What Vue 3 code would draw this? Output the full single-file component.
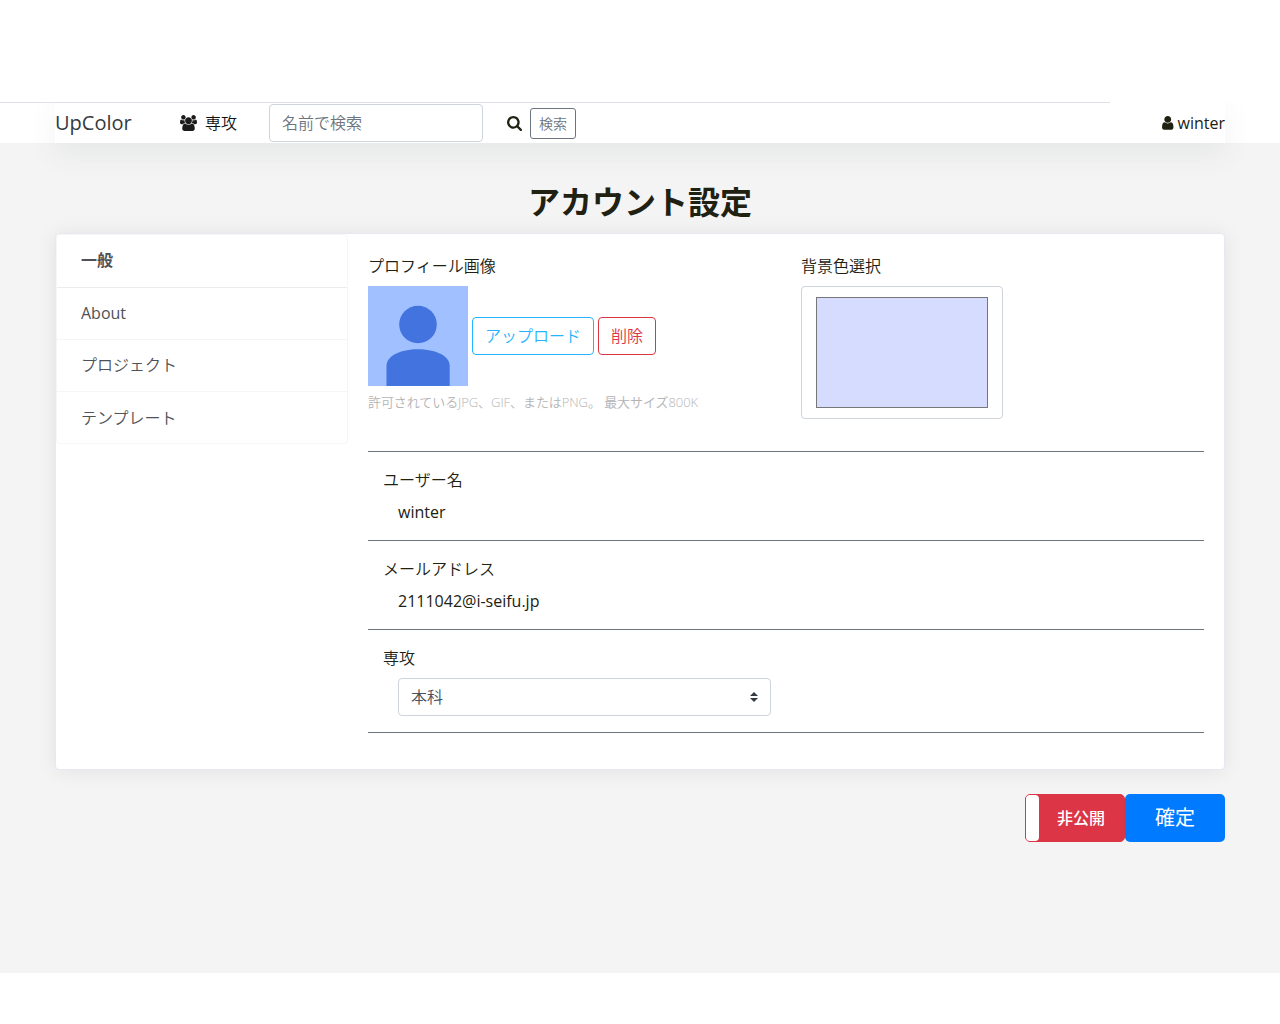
<script setup>
const tabs = ['一般', 'About', 'プロジェクト', 'テンプレート']
const account = { name: 'winter', mail: '2111042@i-seifu.jp' }
</script>

<template>
  <div class="page">
    <header class="topbar">
      <span class="topline"></span>
      <nav class="nav">
        <a class="brand">UpColor</a>
        <a class="major">
          <svg class="users" viewBox="0 0 1920 1792"><path d="M593 896q-162 5-265 128h-134q-82 0-138-40.5t-56-118.5q0-353 124-353 6 0 43.5 21t97.5 42.5 119 21.5q67 0 133-23-5 37-5 66 0 139 81 256zm1071 637q0 120-73 189.5t-194 69.5h-874q-121 0-194-69.5t-73-189.5q0-53 3.5-103.5t14-109 26.5-108.5 43-97.5 62-81 85.5-53.5 111.5-20q10 0 43 21.5t73 48 107 48 135 21.5 135-21.5 107-48 73-48 43-21.5q61 0 111.5 20t85.5 53.5 62 81 43 97.5 26.5 108.5 14 109 3.5 103.5zm-1024-1277q0 106-75 181t-181 75-181-75-75-181 75-181 181-75 181 75 75 181zm704 384q0 159-112.5 271.5t-271.5 112.5-271.5-112.5-112.5-271.5 112.5-271.5 271.5-112.5 271.5 112.5 112.5 271.5zm576 225q0 78-56 118.5t-138 40.5h-134q-103-123-265-128 81-117 81-256 0-29-5-66 66 23 133 23 59 0 119-21.5t97.5-42.5 43.5-21q124 0 124 353zm-128-609q0 106-75 181t-181 75-181-75-75-181 75-181 181-75 181 75 75 181z" /></svg>
          <span>専攻</span>
        </a>
        <div class="field search">名前で検索</div>
        <svg class="glass" viewBox="64 128 1664 1664"><path d="M1216 832q0-185-131.5-316.5t-316.5-131.5-316.5 131.5-131.5 316.5 131.5 316.5 316.5 131.5 316.5-131.5 131.5-316.5zm512 832q0 52-38 90t-90 38q-54 0-90-38l-343-342q-179 124-399 124-143 0-273.5-55.5t-225-150-150-225-55.5-273.5 55.5-273.5 150-225 225-150 273.5-55.5 273.5 55.5 225 150 150 225 55.5 273.5q0 220-124 399l343 343q37 37 37 90z" /></svg>
        <button class="find">検索</button>
        <a class="me">
          <svg class="user" viewBox="256 128 1280 1536"><path d="M1536 1399q0 109-62.5 187t-150.5 78h-854q-88 0-150.5-78t-62.5-187q0-85 8.5-160.5t31.5-152 58.5-131 94-89 134.5-34.5q131 128 313 128t313-128q76 0 134.5 34.5t94 89 58.5 131 31.5 152 8.5 160.5zm-256-887q0 159-112.5 271.5t-271.5 112.5-271.5-112.5-112.5-271.5 112.5-271.5 271.5-112.5 271.5 112.5 112.5 271.5z" /></svg>
          <span>winter</span>
        </a>
      </nav>
    </header>

    <main class="main">
      <h1>アカウント設定</h1>
      <section class="card">
        <ul class="tabs">
          <li v-for="(t, i) in tabs" :key="t" :class="{ active: i === 0, latin: t === 'About' }">{{ t }}</li>
        </ul>
        <div class="content">
          <div class="top">
            <div class="profile">
              <div class="label">プロフィール画像</div>
              <div class="picture">
                <svg class="avatar" viewBox="0 0 100 100">
                  <rect width="100" height="100" fill="#a0c0ff" />
                  <circle cx="50" cy="38.5" r="18.8" fill="#4273df" />
                  <path d="M18.5 100V80C18.5 69.500 33 63.300 50 63.300S81.700 69.500 81.700 80V100z" fill="#4273df" />
                </svg>
                <button class="btn upload">アップロード</button>
                <button class="btn remove">削除</button>
              </div>
              <div class="hint">許可されているJPG、GIF、またはPNG。 最大サイズ800K</div>
            </div>
            <div>
              <div class="label">背景色選択</div>
              <div class="picker"><div class="swatch"></div></div>
            </div>
          </div>
          <div class="row">
            <div class="label">ユーザー名</div>
            <div class="value">{{ account.name }}</div>
          </div>
          <div class="row">
            <div class="label">メールアドレス</div>
            <div class="value">{{ account.mail }}</div>
          </div>
          <div class="row last">
            <div class="label">専攻</div>
            <div class="field select">
              <span>本科</span>
              <svg viewBox="0 0 4 5"><path fill="#343a40" d="M2 0L0 2h4zm0 5L0 3h4z" /></svg>
            </div>
          </div>
        </div>
      </section>
      <div class="actions">
        <div class="toggle"><span class="knob"></span><span class="state">非公開</span></div>
        <button class="submit">確定</button>
      </div>
    </main>
  </div>
</template>

<style>
body {
  margin: 0;
  background: #fff;
}
</style>

<style scoped>
* {
  box-sizing: border-box;
}
.page {
  height: 1024px;
  padding-top: 102px;
  font: 400 16px/24px "Open Sans", "Noto Sans CJK JP", sans-serif;
  color: #212112;
}
.label,
.major,
.field,
.btn,
.hint,
.tabs li {
  font-weight: 350;
}
button {
  font: inherit;
  padding: 0;
  background: none;
}
.topbar {
  height: 41px;
  padding: 1px 55px 0;
}
.topline {
  display: block;
  width: 1110px;
  height: 1px;
  margin: -1px 0 0 -55px;
  background: #dee2e6;
}
.nav {
  position: relative;
  z-index: 1;
  display: flex;
  align-items: center;
  height: 40px;
  background: #fff;
  box-shadow: 0 10px 30px rgba(65, 80, 95, 0.08);
  clip-path: inset(0 -40px -60px -40px);
}
.brand {
  width: 125px;
  font-size: 20px;
  line-height: 30px;
  color: #343a40;
}
.major {
  display: flex;
  align-items: center;
  width: 89px;
  gap: 8px;
  color: #111;
}
.major span {
  margin-top: -1px;
}
.users {
  width: 17px;
  height: 16px;
  fill: #1b1b1b;
}
.field {
  height: 38px;
  padding: 6px 12px;
  border: 1px solid #ced4da;
  border-radius: 4px;
  background: #fff;
  color: #6c757d;
}
.search {
  width: 214px;
}
.glass {
  width: 15px;
  height: 15px;
  margin: 1px 8px 0 24px;
  fill: #212112;
}
.find {
  width: 46px;
  height: 31px;
  margin-top: 1px;
  border: 1px solid #6c757d;
  border-radius: 3px;
  font-size: 14px;
  font-weight: 350;
  color: #6c757d;
}
.me {
  display: flex;
  align-items: center;
  gap: 4px;
  margin-left: auto;
}
.user {
  width: 11.500px;
  height: 13.700px;
  fill: #212112;
}
.main {
  height: 830px;
  padding: 35px 55px 0;
  background: #f4f4f4;
}
h1 {
  margin: 0;
  height: 55px;
  font-size: 32px;
  font-weight: 700;
  line-height: 48px;
  text-align: center;
}
.card {
  display: flex;
  height: 537px;
  border: 1px solid #e7e9f2;
  border-radius: 4px;
  background: #fff;
  box-shadow: 0 1px 20px rgba(24, 28, 60, 0.08);
}
.tabs {
  width: 292px;
  height: 210px;
  margin: 0;
  padding: 0;
  list-style: none;
  border: 1px solid #f6f6f7;
  border-radius: 4px;
}
.tabs li {
  height: 52px;
  padding: 13px 24px;
  border-bottom: 1px solid #f5f5f6;
  color: #4e5155;
}
.tabs li.latin {
  font-weight: 400;
}
.tabs li.active {
  height: 53px;
  border-bottom-color: #ececee;
  font-weight: 700;
}
.tabs li:last-child {
  padding-top: 14px;
  border-bottom: 0;
}
.content {
  width: 836px;
  margin-left: 20px;
  padding-top: 20px;
}
.top {
  display: flex;
  height: 197px;
}
.profile {
  width: 433px;
}
.label {
  height: 32px;
}
.picture {
  display: flex;
  align-items: center;
  gap: 4px;
}
.avatar {
  width: 100px;
  height: 100px;
}
.btn {
  height: 38px;
  border: 1px solid;
  border-radius: 4px;
}
.upload {
  width: 122px;
  color: #26b4ff;
}
.remove {
  width: 58px;
  color: #dc3545;
}
.hint {
  margin-top: 6px;
  font-size: 13px;
  line-height: 20px;
  letter-spacing: -0.07px;
  color: #b3b3b5;
  white-space: nowrap;
}
.picker {
  width: 202px;
  height: 133px;
  padding: 10px 14px;
  border: 1px solid #ced4da;
  border-radius: 4px;
}
.swatch {
  height: 111px;
  border: 1px solid #777;
  background: #d5dcff;
}
.row {
  height: 89px;
  padding: 16px 15px 0;
  border-top: 1px solid #6c757d;
}
.row.last {
  height: 104px;
  border-bottom: 1px solid #6c757d;
}
.value {
  margin-left: 15px;
}
.select {
  display: flex;
  align-items: center;
  justify-content: space-between;
  width: 373px;
  margin-left: 15px;
  color: #495057;
}
.select svg {
  width: 8px;
  height: 10px;
}
.actions {
  display: flex;
  justify-content: flex-end;
  margin-top: 24px;
}
.toggle {
  display: flex;
  width: 100px;
  height: 48px;
  border: 1px solid #dc3545;
  border-radius: 5px;
  background: #dc3545;
  color: #fff;
}
.knob {
  width: 13px;
  border-radius: 4px;
  background: #fff;
}
.state {
  flex: 1;
  padding-right: 1px;
  line-height: 46px;
  text-align: center;
  font-weight: 500;
}
.submit {
  width: 100px;
  height: 48px;
  border: 0;
  border-radius: 5px;
  background: #007bff;
  font-size: 20px;
  font-weight: 400;
  color: #fff;
}
</style>
